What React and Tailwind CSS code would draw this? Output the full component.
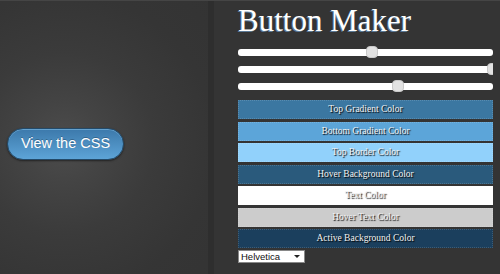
import React from "react";

const rows = [
  { label: "Top Gradient Color", bg: "bg-[#3b77a1]" },
  { label: "Bottom Gradient Color", bg: "bg-[#5ca5d9]" },
  { label: "Top Border Color", bg: "bg-[#91d1fb]" },
  { label: "Hover Background Color", bg: "bg-[#2a5a7c]" },
  { label: "Text Color", bg: "bg-white" },
  { label: "Hover Text Color", bg: "bg-[#cccccc]" },
  { label: "Active Background Color", bg: "bg-[#1b3f5d]" },
];

function Slider({ pos }) {
  return (
    <div className="relative h-[12px] flex items-center overflow-hidden">
      <div className="h-[7px] w-full rounded-[3px] bg-white" />
      <div
        className="absolute top-0 h-[12px] w-[12px] rounded-[4px] bg-[#e2e2e2] border border-[#c9c9c9]"
        style={{ left: pos }}
      />
    </div>
  );
}

export default function App() {
  return (
    <div className="flex w-[500px] h-[274px] overflow-hidden bg-[#343434] border-t border-[#454545]">
      <div className="w-[208px] h-full flex items-center pl-[7px] bg-[radial-gradient(circle_at_64px_142px,#4d4d4d_0px,#444_40px,#3b3b3b_90px,#353535_150px,#333_220px)]">
        <div className="w-[117px] h-[32px] mt-[12px] rounded-full border border-[#234a69] bg-gradient-to-b from-[#3c79ab] to-[#5da4d7] shadow-[0_1px_2px_rgba(0,0,0,0.5),inset_0_1px_0_rgba(140,200,240,0.5)] flex items-center justify-center text-white text-[14.5px] font-['Liberation_Sans',Arial,sans-serif] [text-shadow:0_-1px_0_rgba(0,0,0,0.25)]">
          View the CSS
        </div>
      </div>
      <div className="w-[6px] h-full bg-[#2e2e2e]" />
      <div className="flex-1 flex flex-col pl-[24px] pr-[7px]">
        <div className="h-[41px] pt-[2px] text-[31px] leading-[36px] text-white font-['Liberation_Serif','Times_New_Roman',serif] [text-shadow:-1px_1px_0_rgba(120,170,220,0.6)]">
          Button Maker
        </div>
        <div className="flex flex-col gap-[5px] mt-[4px]">
          <Slider pos={128} />
          <Slider pos={249} />
          <Slider pos={154} />
        </div>
        <div className="flex flex-col gap-[2.5px] mt-[8px]">
          {rows.map((r) => (
            <div
              key={r.label}
              className={`h-[19px] ${r.bg} border border-dotted border-[rgba(255,255,255,0.15)] flex items-center justify-center text-[9.5px] text-[#f2f2f2] font-['Liberation_Serif','Times_New_Roman',serif] [text-shadow:1px_1px_1px_#000]`}
            >
              {r.label}
            </div>
          ))}
        </div>
        <div className="mt-[2px] w-[67px] h-[13px] bg-white border border-[#888] flex items-center justify-between pl-[2px] pr-[4px] text-[9.5px] leading-none text-[#111] font-['Liberation_Sans',Arial,sans-serif]">
          <span>Helvetica</span>
          <span className="w-0 h-0 border-l-[3px] border-r-[3px] border-t-[3px] border-l-transparent border-r-transparent border-t-[#222]" />
        </div>
      </div>
    </div>
  );
}
